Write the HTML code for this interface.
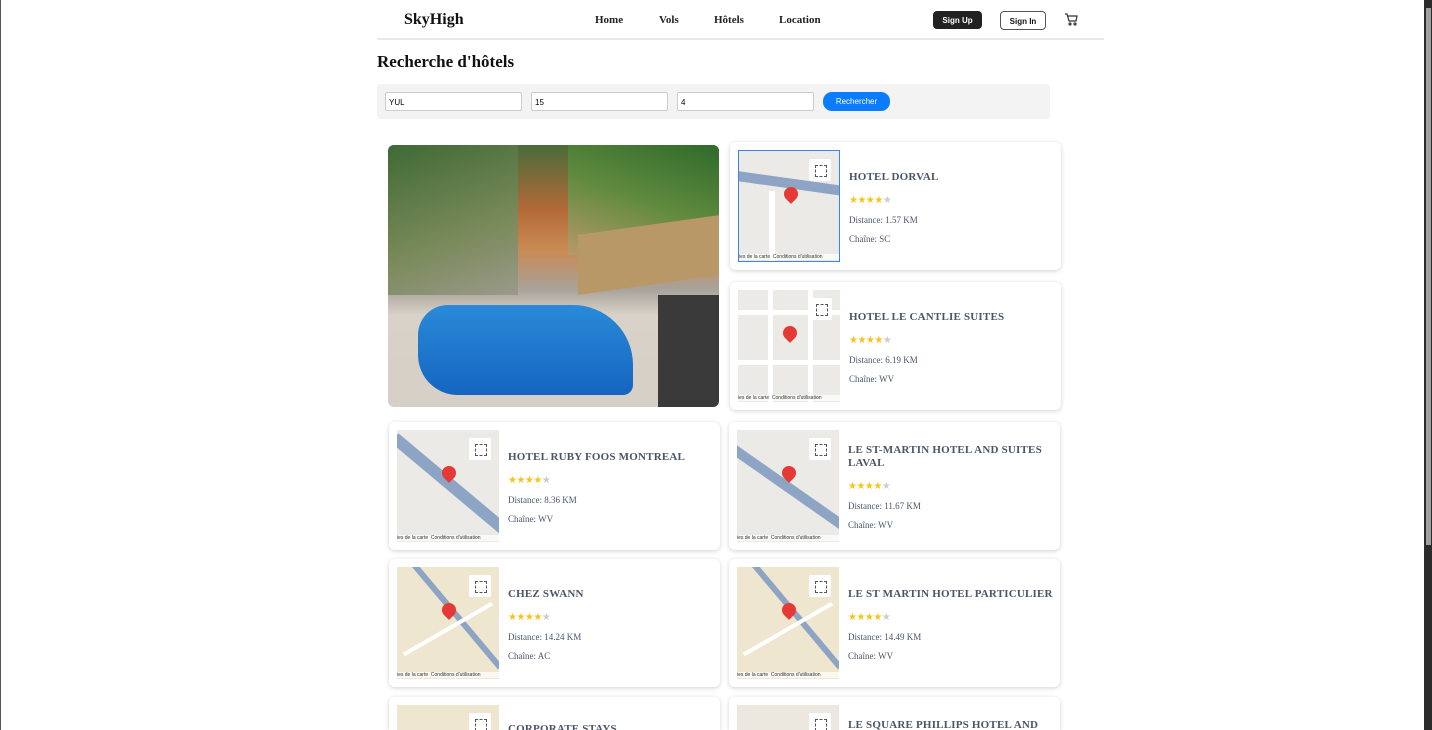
<!DOCTYPE html>
<html style="height:730px;overflow:hidden"><head><meta charset="utf-8"><style>
*{box-sizing:border-box;margin:0;padding:0}
body{width:1432px;height:730px;overflow:hidden;background:#fff;position:relative;font-family:"Liberation Serif",serif;}
.abs{position:absolute}
.nav a{position:absolute;top:14px;font-weight:bold;font-size:11px;color:#222}
.btn{position:absolute;font-family:"Liberation Sans",sans-serif;font-weight:bold;font-size:8px;border-radius:4px;text-align:center}
.inp{position:absolute;top:92px;width:137px;height:19px;border:1px solid #ccc;background:#fff;border-radius:2px;font-family:"Liberation Sans",sans-serif;font-size:8px;padding:5px 3px}
.card{position:absolute;width:331px;height:128px;background:#fff;border-radius:6px;box-shadow:0 1px 5px rgba(0,0,0,.18);overflow:hidden}
.map{position:absolute;left:8px;top:8px;width:102px;height:112px;background:#eceae6;overflow:hidden}
.map .road{position:absolute;background:#8ea4c4}
.map .st{position:absolute;background:#fff}
.map .pin{position:absolute;left:45px;top:36px;width:14px;height:14px;background:#e53935;border-radius:50% 50% 50% 0;transform:rotate(-45deg)}
.map .fs{position:absolute;right:8px;top:8px;width:22px;height:22px;background:#fff;border-radius:2px}
.map .fs:after{content:"";position:absolute;left:6px;top:6px;width:10px;height:10px;border:1.5px dashed #555}
.map .ft{position:absolute;left:0;bottom:1px;width:100%;font-family:"Liberation Sans",sans-serif;font-size:5px;color:#333;background:rgba(255,255,255,.7);white-space:nowrap}
.info{position:absolute;left:119px;color:#4a5568}
.info h3{font-size:11px;font-weight:bold;letter-spacing:.2px;line-height:13px;margin-bottom:11px;text-transform:uppercase}
.stars{font-size:10px;color:#f5c518;margin-bottom:9px;letter-spacing:-0.5px}
.stars span{color:#ccc}
.info p{font-size:9px;margin-bottom:9px}
</style></head><body>
<div class="abs" style="left:0;top:0;width:1px;height:730px;background:#555"></div>
<div class="abs" style="left:1424px;top:0;width:8px;height:730px;background:#2b2b2b"></div>
<div class="abs" style="left:1426px;top:8px;width:5px;height:537px;background:#a0a0a0"></div>

<div class="abs" style="left:404px;top:11px;font-size:16px;font-weight:bold;color:#111">SkyHigh</div>
<div class="nav"><a style="left:595px">Home</a><a style="left:659px">Vols</a><a style="left:714px">Hôtels</a><a style="left:779px">Location</a></div>
<div class="btn" style="left:933px;top:11px;width:49px;height:18px;background:#222;color:#fff;padding-top:5px">Sign Up</div>
<div class="btn" style="left:1000px;top:11px;width:46px;height:19px;border:1px solid #555;color:#111;padding-top:5px">Sign In</div>
<svg class="abs" style="left:1064px;top:13px" width="14" height="13" viewBox="0 0 14 13" fill="none" stroke="#333" stroke-width="1.2"><path d="M1 1h2l2 7h7l1-5H4"/><circle cx="6" cy="11" r="1"/><circle cx="11" cy="11" r="1"/></svg>
<div class="abs" style="left:377px;top:38px;width:727px;height:2px;background:#e8e8e8"></div>

<div class="abs" style="left:377px;top:52px;font-size:17px;font-weight:bold;color:#111">Recherche d'hôtels</div>
<div class="abs" style="left:377px;top:84px;width:673px;height:35px;background:#f3f3f3;border-radius:3px"></div>
<div class="inp" style="left:385px">YUL</div>
<div class="inp" style="left:531px">15</div>
<div class="inp" style="left:677px">4</div>
<div class="btn" style="left:823px;top:92px;width:67px;height:19px;background:#0a7cff;color:#fff;border-radius:9px;font-weight:normal;padding-top:5px">Rechercher</div>

<div class="abs" style="left:388px;top:145px;width:331px;height:262px;border-radius:6px;overflow:hidden;background:linear-gradient(180deg,#4a6b3a 0%,#b46a38 25%,#c98a52 40%,#a8a29a 55%,#d8d2c8 65%,#d5cfc5 100%)">
<div class="abs" style="left:0;top:0;width:130px;height:150px;background:linear-gradient(160deg,#3f6a35,#7a8a5a 60%,#9a9a8a)"></div>
<div class="abs" style="left:180px;top:0;width:151px;height:110px;background:linear-gradient(200deg,#2f6a2a,#5f8a3e 50%,#b89a68)"></div>
<div class="abs" style="left:190px;top:80px;width:141px;height:60px;background:#b99867;transform:skewY(-8deg)"></div>
<div class="abs" style="left:30px;top:160px;width:215px;height:90px;background:linear-gradient(180deg,#2a8ad8,#1565c0);border-radius:30px 60px 10px 40px"></div>
<div class="abs" style="left:270px;top:150px;width:61px;height:112px;background:#3a3a3a"></div>
</div>

<div class="card" style="left:730px;top:142px"><div class="map" style="border:1.5px solid #3b82f6"><div class="road" style="left:-10px;top:28px;width:130px;height:10px;transform:rotate(8deg)"></div><div class="st" style="left:30px;top:40px;width:6px;height:80px"></div><div class="pin"></div><div class="fs"></div><div class="ft">ies de la carte &nbsp;Conditions d'utilisation</div></div><div class="info" style="top:29px"><h3>HOTEL DORVAL</h3><div class="stars">★★★★<span>★</span></div><p>Distance: 1.57 KM</p><p>Chaîne: SC</p></div></div>

<div class="card" style="left:730px;top:282px"><div class="map"><div class="st" style="left:0;top:20px;width:102px;height:5px"></div><div class="st" style="left:30px;top:0;width:5px;height:112px"></div><div class="st" style="left:70px;top:0;width:5px;height:112px"></div><div class="st" style="left:0;top:70px;width:102px;height:5px"></div><div class="pin"></div><div class="fs"></div><div class="ft">ies de la carte &nbsp;Conditions d'utilisation</div></div><div class="info" style="top:29px"><h3>HOTEL LE CANTLIE SUITES</h3><div class="stars">★★★★<span>★</span></div><p>Distance: 6.19 KM</p><p>Chaîne: WV</p></div></div>

<div class="card" style="left:389px;top:422px"><div class="map"><div class="road" style="left:-20px;top:50px;width:150px;height:12px;transform:rotate(40deg)"></div><div class="pin"></div><div class="fs"></div><div class="ft">ies de la carte &nbsp;Conditions d'utilisation</div></div><div class="info" style="top:29px"><h3>HOTEL RUBY FOOS MONTREAL</h3><div class="stars">★★★★<span>★</span></div><p>Distance: 8.36 KM</p><p>Chaîne: WV</p></div></div>

<div class="card" style="left:729px;top:422px"><div class="map"><div class="road" style="left:-20px;top:55px;width:150px;height:10px;transform:rotate(35deg)"></div><div class="pin"></div><div class="fs"></div><div class="ft">ies de la carte &nbsp;Conditions d'utilisation</div></div><div class="info" style="top:22px"><h3>LE ST-MARTIN HOTEL AND SUITES LAVAL</h3><div class="stars">★★★★<span>★</span></div><p>Distance: 11.67 KM</p><p>Chaîne: WV</p></div></div>

<div class="card" style="left:389px;top:559px"><div class="map" style="background:#efe6cf"><div class="road" style="left:-20px;top:40px;width:150px;height:6px;transform:rotate(50deg)"></div><div class="st" style="left:0;top:60px;width:102px;height:4px;transform:rotate(-30deg)"></div><div class="pin"></div><div class="fs"></div><div class="ft">ies de la carte &nbsp;Conditions d'utilisation</div></div><div class="info" style="top:29px"><h3>CHEZ SWANN</h3><div class="stars">★★★★<span>★</span></div><p>Distance: 14.24 KM</p><p>Chaîne: AC</p></div></div>

<div class="card" style="left:729px;top:559px"><div class="map" style="background:#efe6cf"><div class="road" style="left:-20px;top:40px;width:150px;height:6px;transform:rotate(50deg)"></div><div class="st" style="left:0;top:60px;width:102px;height:4px;transform:rotate(-30deg)"></div><div class="pin"></div><div class="fs"></div><div class="ft">ies de la carte &nbsp;Conditions d'utilisation</div></div><div class="info" style="top:29px"><h3>LE ST MARTIN HOTEL PARTICULIER</h3><div class="stars">★★★★<span>★</span></div><p>Distance: 14.49 KM</p><p>Chaîne: WV</p></div></div>

<div class="card" style="left:389px;top:697px;height:33px;border-radius:6px 6px 0 0"><div class="map" style="background:#efe6cf"><div class="fs"></div></div><div class="info" style="top:26px"><h3>CORPORATE STAYS</h3></div></div>
<div class="card" style="left:729px;top:697px;height:33px;border-radius:6px 6px 0 0"><div class="map" style="background:#ece8e0"><div class="fs"></div></div><div class="info" style="top:22px"><h3>LE SQUARE PHILLIPS HOTEL AND</h3></div></div>
</body></html>
